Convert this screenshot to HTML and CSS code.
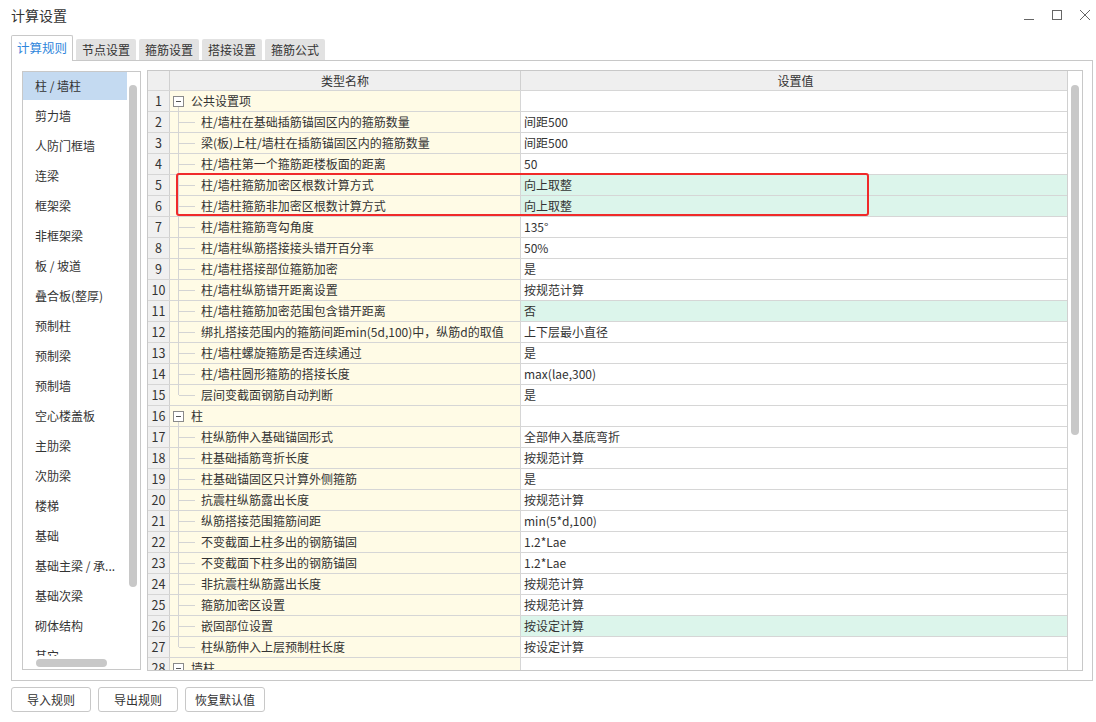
FILE: index.html
```html
<!DOCTYPE html>
<html lang="zh-CN">
<head>
<meta charset="utf-8">
<title>计算设置</title>
<link rel="stylesheet" href="styles.css">
</head>
<body>
<div class="titlebar">
  <span class="title">计算设置</span>
  <div class="winctl">
    <svg width="12" height="12" viewBox="0 0 12 12"><path d="M1 10.5H11" stroke="#666" stroke-width="1" fill="none"/></svg>
    <svg width="12" height="12" viewBox="0 0 12 12"><rect x="1.5" y="1.5" width="9" height="9" stroke="#666" stroke-width="1" fill="none"/></svg>
    <svg width="12" height="12" viewBox="0 0 12 12"><path d="M1 1L11 11M11 1L1 11" stroke="#666" stroke-width="1" fill="none"/></svg>
  </div>
</div>
<div class="tabs">
  <div class="tab active">计算规则</div>
  <div class="tab">节点设置</div>
  <div class="tab">箍筋设置</div>
  <div class="tab">搭接设置</div>
  <div class="tab">箍筋公式</div>
</div>
<div class="panel">
  <div class="list">
    <div class="list-body">
      <div class="items">
        <div class="item selected">柱 / 墙柱</div>
        <div class="item">剪力墙</div>
        <div class="item">人防门框墙</div>
        <div class="item">连梁</div>
        <div class="item">框架梁</div>
        <div class="item">非框架梁</div>
        <div class="item">板 / 坡道</div>
        <div class="item">叠合板(整厚)</div>
        <div class="item">预制柱</div>
        <div class="item">预制梁</div>
        <div class="item">预制墙</div>
        <div class="item">空心楼盖板</div>
        <div class="item">主肋梁</div>
        <div class="item">次肋梁</div>
        <div class="item">楼梯</div>
        <div class="item">基础</div>
        <div class="item">基础主梁 / 承...</div>
        <div class="item">基础次梁</div>
        <div class="item">砌体结构</div>
        <div class="item">其它</div>
      </div>
      <div class="lvbar"><div class="lvthumb"></div></div>
    </div>
    <div class="lhbar"><div class="lhthumb"></div></div>
  </div>
  <div class="table">
    <div class="grid">
      <div class="row head"><div class="num"></div><div class="name">类型名称</div><div class="val">设置值</div></div>
      <div class="row"><div class="num">1</div><div class="name group"><span class="box"></span>公共设置项</div><div class="val"></div></div>
      <div class="row"><div class="num">2</div><div class="name child">柱/墙柱在基础插筋锚固区内的箍筋数量</div><div class="val">间距500</div></div>
      <div class="row"><div class="num">3</div><div class="name child">梁(板)上柱/墙柱在插筋锚固区内的箍筋数量</div><div class="val">间距500</div></div>
      <div class="row"><div class="num">4</div><div class="name child">柱/墙柱第一个箍筋距楼板面的距离</div><div class="val">50</div></div>
      <div class="row"><div class="num">5</div><div class="name child">柱/墙柱箍筋加密区根数计算方式</div><div class="val green">向上取整</div></div>
      <div class="row"><div class="num">6</div><div class="name child">柱/墙柱箍筋非加密区根数计算方式</div><div class="val green">向上取整</div></div>
      <div class="row"><div class="num">7</div><div class="name child">柱/墙柱箍筋弯勾角度</div><div class="val">135°</div></div>
      <div class="row"><div class="num">8</div><div class="name child">柱/墙柱纵筋搭接接头错开百分率</div><div class="val">50%</div></div>
      <div class="row"><div class="num">9</div><div class="name child">柱/墙柱搭接部位箍筋加密</div><div class="val">是</div></div>
      <div class="row"><div class="num">10</div><div class="name child">柱/墙柱纵筋错开距离设置</div><div class="val">按规范计算</div></div>
      <div class="row"><div class="num">11</div><div class="name child">柱/墙柱箍筋加密范围包含错开距离</div><div class="val green">否</div></div>
      <div class="row"><div class="num">12</div><div class="name child">绑扎搭接范围内的箍筋间距min(5d,100)中，纵筋d的取值</div><div class="val">上下层最小直径</div></div>
      <div class="row"><div class="num">13</div><div class="name child">柱/墙柱螺旋箍筋是否连续通过</div><div class="val">是</div></div>
      <div class="row"><div class="num">14</div><div class="name child">柱/墙柱圆形箍筋的搭接长度</div><div class="val">max(lae,300)</div></div>
      <div class="row"><div class="num">15</div><div class="name child last">层间变截面钢筋自动判断</div><div class="val">是</div></div>
      <div class="row"><div class="num">16</div><div class="name group"><span class="box"></span>柱</div><div class="val"></div></div>
      <div class="row"><div class="num">17</div><div class="name child">柱纵筋伸入基础锚固形式</div><div class="val">全部伸入基底弯折</div></div>
      <div class="row"><div class="num">18</div><div class="name child">柱基础插筋弯折长度</div><div class="val">按规范计算</div></div>
      <div class="row"><div class="num">19</div><div class="name child">柱基础锚固区只计算外侧箍筋</div><div class="val">是</div></div>
      <div class="row"><div class="num">20</div><div class="name child">抗震柱纵筋露出长度</div><div class="val">按规范计算</div></div>
      <div class="row"><div class="num">21</div><div class="name child">纵筋搭接范围箍筋间距</div><div class="val">min(5*d,100)</div></div>
      <div class="row"><div class="num">22</div><div class="name child">不变截面上柱多出的钢筋锚固</div><div class="val">1.2*Lae</div></div>
      <div class="row"><div class="num">23</div><div class="name child">不变截面下柱多出的钢筋锚固</div><div class="val">1.2*Lae</div></div>
      <div class="row"><div class="num">24</div><div class="name child">非抗震柱纵筋露出长度</div><div class="val">按规范计算</div></div>
      <div class="row"><div class="num">25</div><div class="name child">箍筋加密区设置</div><div class="val">按规范计算</div></div>
      <div class="row"><div class="num">26</div><div class="name child">嵌固部位设置</div><div class="val green">按设定计算</div></div>
      <div class="row"><div class="num">27</div><div class="name child last">柱纵筋伸入上层预制柱长度</div><div class="val">按设定计算</div></div>
      <div class="row"><div class="num">28</div><div class="name group"><span class="box"></span>墙柱</div><div class="val"></div></div>
    </div>
    <div class="vscroll"><div class="vthumb"></div></div>
    <div class="redbox"></div>
  </div>
</div>
<div class="buttons">
  <button class="btn">导入规则</button>
  <button class="btn">导出规则</button>
  <button class="btn">恢复默认值</button>
</div>
</body>
</html>
```
FILE: styles.css
```css
* { box-sizing: border-box; }
html, body { margin: 0; padding: 0; background: #fff; }
body {
  width: 1096px;
  height: 722px;
  overflow: hidden;
  font-family: "Noto Sans CJK SC", "Noto Sans", sans-serif;
  font-size: 12px;
  color: #333;
}
.titlebar {
  height: 35px;
  display: flex;
  align-items: flex-start;
  justify-content: space-between;
  padding-left: 11px;
}
.title {
  font-size: 14px;
  line-height: 30px;
  color: #333;
}
.winctl {
  display: flex;
  gap: 16px;
  padding-top: 9px;
  padding-right: 5px;
}
.winctl svg { display: block; }
.tabs {
  height: 26px;
  margin-bottom: -1px;
  padding-left: 11px;
  display: flex;
  align-items: flex-end;
  gap: 3px;
  position: relative;
  z-index: 2;
}
.tab {
  width: 60px;
  height: 21px;
  margin-bottom: 1px;
  background: #e2e2e2;
  text-align: center;
  line-height: 21px;
  color: #333;
  border-radius: 2px 2px 0 0;
}
.tab.active {
  width: 62px;
  height: 26px;
  margin-bottom: 0;
  background: #fff;
  border: 1px solid #c8c8c8;
  border-bottom: none;
  color: #2f86dc;
  line-height: 24px;
  font-size: 12.5px;
}
.panel {
  margin-left: 11px;
  width: 1082px;
  height: 621px;
  border: 1px solid #c8c8c8;
  padding: 10px 9px 9px 10px;
  display: flex;
  align-items: flex-start;
  gap: 6px;
}
.list {
  width: 119px;
  height: 599px;
  border: 1px solid #c8c8c8;
  display: flex;
  flex-direction: column;
}
.list-body {
  height: 584px;
  display: flex;
  overflow: hidden;
}
.items {
  width: 104px;
  flex: none;
}
.item {
  height: 28px;
  margin-bottom: 2px;
  line-height: 28px;
  padding-left: 12px;
  white-space: nowrap;
  overflow: hidden;
}
.item.selected { background: #c4daf1; }
.lvbar {
  flex: 1;
  padding-left: 2px;
  padding-top: 13px;
}
.lvthumb {
  width: 8px;
  height: 502px;
  border-radius: 4px;
  background: #c8c8c8;
}
.lhbar {
  height: 13px;
  padding-top: 3px;
  padding-left: 13px;
}
.lhthumb {
  width: 71px;
  height: 8px;
  border-radius: 4px;
  background: #c8c8c8;
}
.table {
  margin-top: -1px;
  width: 936px;
  height: 601px;
  border: 1px solid #c8c8c8;
  display: flex;
  position: relative;
}
.grid {
  flex: 1;
  overflow: hidden;
}
.row {
  display: flex;
  height: 21px;
  border-bottom: 1px solid #d6d6d6;
  line-height: 20px;
}
.num {
  width: 22px;
  flex: none;
  background: #f0f0f0;
  border-right: 1px solid #d0d0d0;
  text-align: center;
  font-size: 12.5px;
}
.name {
  width: 351px;
  flex: none;
  background: #fffbe6;
  border-right: 1px solid #d6d6d6;
  position: relative;
  white-space: nowrap;
  overflow: visible;
}
.val {
  flex: 1;
  padding-left: 3px;
  background: #fff;
}
.val.green { background: #dcf5eb; }
.head { height: 20px; line-height: 19px; }
.head .num, .head .name, .head .val {
  background: #efefef;
  text-align: center;
}
.head .name { border-right-color: #d0d0d0; }
.group { padding-left: 21px; }
.group::before {
  content: "";
  position: absolute;
  left: 8px;
  top: 16px;
  bottom: -1px;
  border-left: 1px solid #d4d4d4;
}
.box {
  position: absolute;
  left: 3px;
  top: 5px;
  width: 11px;
  height: 11px;
  border: 1px solid #8a8a8a;
  background: #fff;
  z-index: 1;
}
.box::after {
  content: "";
  position: absolute;
  left: 2px;
  top: 4px;
  width: 5px;
  height: 1px;
  background: #555;
}
.child { padding-left: 31px; }
.child::before {
  content: "";
  position: absolute;
  left: 8px;
  top: 0;
  bottom: -1px;
  border-left: 1px solid #d4d4d4;
}
.child.last::before { bottom: auto; height: 10px; }
.child::after {
  content: "";
  position: absolute;
  left: 9px;
  top: 10px;
  width: 16px;
  border-top: 1px solid #d4d4d4;
}
.vscroll {
  width: 15px;
  flex: none;
  border-left: 1px solid #d0d0d0;
  padding-left: 3px;
  padding-top: 14px;
}
.vthumb {
  width: 8px;
  height: 350px;
  border-radius: 4px;
  background: #c8c8c8;
}
.redbox {
  position: absolute;
  left: 28px;
  top: 102px;
  width: 693px;
  height: 43px;
  border: 2px solid #f02a2a;
  border-radius: 3px;
  pointer-events: none;
}
.buttons {
  margin-top: 6px;
  margin-left: 11px;
  display: flex;
  gap: 7px;
}
.btn {
  width: 80px;
  height: 25px;
  border: 1px solid #c8c8c8;
  border-radius: 3px;
  background: #fff;
  font-family: "Noto Sans CJK SC", "Noto Sans", sans-serif;
  font-size: 12px;
  color: #333;
  padding: 0;
}
```
